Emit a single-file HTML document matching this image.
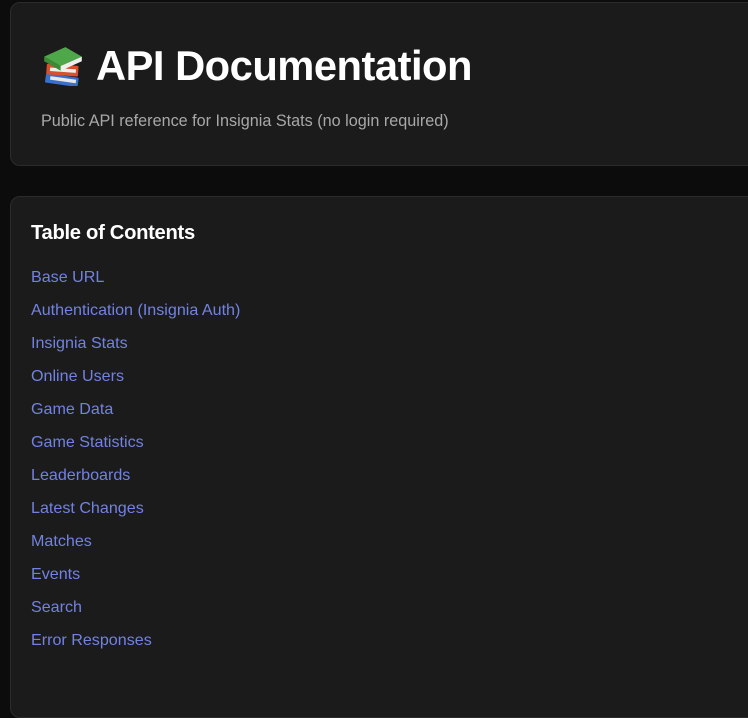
<!DOCTYPE html>
<html><head><style>
html,body{margin:0;padding:0;background:#0c0c0c;width:748px;height:673px;overflow:hidden;font-family:"Liberation Sans",sans-serif;}
.card{position:absolute;left:10px;width:760px;background:#1b1b1b;border:1px solid #2c2c2c;border-radius:10px;}
#c1{top:2px;height:162px;}
#c2{top:196px;height:520px;}
h1{position:absolute;left:96px;top:42px;margin:0;font-size:41.7px;font-weight:bold;color:#fff;letter-spacing:-0.5px;line-height:48px;}
.emoji{position:absolute;left:43px;top:46px;}
.sub{position:absolute;left:41px;top:112px;font-size:16.2px;color:#a8a8a8;}
h2{position:absolute;left:31px;top:222px;margin:0;font-size:20.2px;color:#fff;font-weight:bold;letter-spacing:-0.3px;line-height:22px;}
.links{position:absolute;left:31px;top:267px;}
.links a{display:block;height:33px;line-height:20px;font-size:16.1px;color:#7282e2;text-decoration:none;}
</style></head><body>
<div class="card" id="c1"></div>
<svg class="emoji" width="40" height="40" viewBox="3 3 34 34">
<rect x="5" y="28" width="28" height="8" rx="1" fill="#3b6fc9" transform="rotate(8 19 32)"/>
<rect x="9" y="30" width="22" height="3" fill="#e8e8e8" transform="rotate(8 19 32)"/>
<rect x="6" y="19" width="27" height="9" rx="1" fill="#d9502f" transform="rotate(4 19 23)"/>
<rect x="9" y="22" width="22" height="3" fill="#eee" transform="rotate(4 19 23)"/>
<polygon points="4,12 22,4 36,12 18,20" fill="#4ea84a"/>
<polygon points="4,12 18,20 18,24 4,16" fill="#3a8a36"/>
<polygon points="18,20 36,12 36,16 18,24" fill="#eee"/>
</svg>
<h1>API Documentation</h1>
<div class="sub">Public API reference for Insignia Stats (no login required)</div>
<div class="card" id="c2"></div>
<h2>Table of Contents</h2>
<div class="links">
<a>Base URL</a><a>Authentication (Insignia Auth)</a><a>Insignia Stats</a><a>Online Users</a><a>Game Data</a><a>Game Statistics</a><a>Leaderboards</a><a>Latest Changes</a><a>Matches</a><a>Events</a><a>Search</a><a>Error Responses</a>
</div>
</body></html>
